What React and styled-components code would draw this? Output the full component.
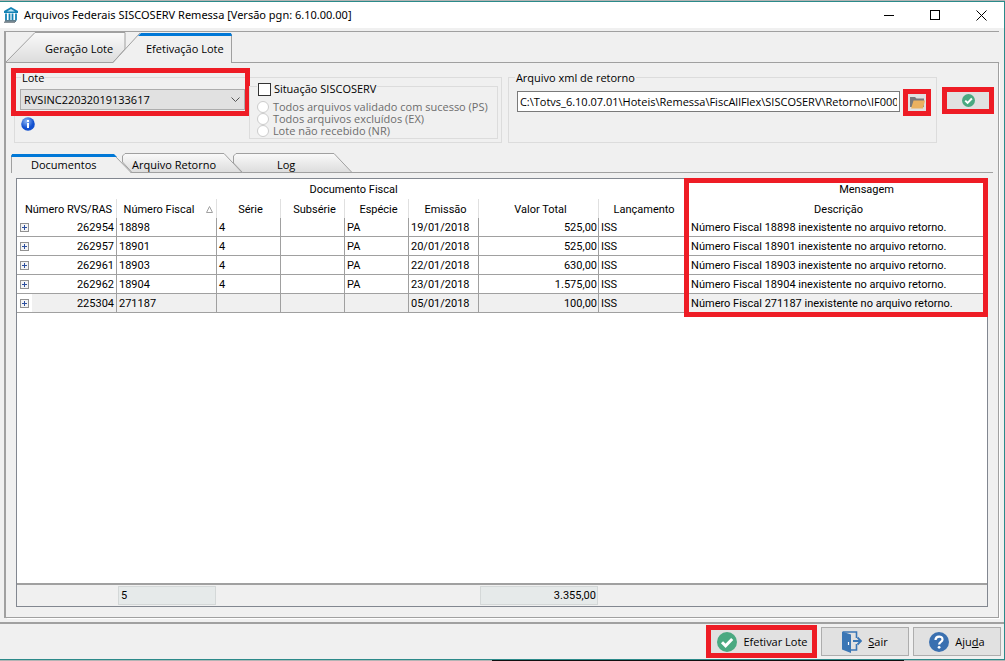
import React from 'react';
import styled, { createGlobalStyle, css } from 'styled-components';

const GlobalStyle = createGlobalStyle`
  * {
    box-sizing: border-box;
  }
  body {
    margin: 0;
    font-family: 'Open Sans', 'Noto Sans', sans-serif;
    font-size: 11px;
    line-height: 14px;
    color: #000;
  }
  button, input, select {
    font: inherit;
    color: inherit;
  }
`;

//--------- WINDOW ----------//
const Desktop = styled.div`
  min-height: 100vh;
  padding: 1px 0;
  display: flex;
  background: linear-gradient(#b4b4b4, #b4b4b4) top / 100% 1px no-repeat,
    linear-gradient(90deg, #b4b4b4 49%, #101010 49%, #101010 90%, #b4b4b4 90%);
`;

const Window = styled.div`
  flex: 1;
  min-width: 0;
  display: flex;
  flex-direction: column;
  background: #f0f0f0;
  border: 1px solid #2b8a8a;
  border-left: 0;
`;

const TitleBar = styled.header`
  display: flex;
  align-items: center;
  height: 26px;
  padding-left: 3px;
  background: #fff;
`;

const Title = styled.h1`
  flex: 1;
  margin: 0 0 0 5px;
  font-size: 11px;
  line-height: 16px;
  font-weight: 400;
  font-family: 'Noto Sans', sans-serif;
  white-space: nowrap;
`;

const CaptionButton = styled.button`
  width: 46px;
  height: 26px;
  padding: 0;
  border: 0;
  background: none;
  display: flex;
  align-items: center;
  justify-content: center;
`;

const Panel = styled.main`
  flex: 1;
  display: flex;
  flex-direction: column;
  margin: 3px 5px 4px 4px;
  border-left: 2px solid #a0a0a0;
  border-top: 1px solid #a0a0a0;
`;

const PanelBody = styled.div`
  flex: 1;
  display: flex;
  flex-direction: column;
  border-right: 1px solid #a0a0a0;
  border-bottom: 1px solid #a0a0a0;
  box-shadow: 1px 1px 0 #fff;
`;

//--------- TABS ----------//
const TabStrip = styled.div`
  display: flex;
  height: ${({ $small }) => ($small ? 20 : 31)}px;
  margin: ${({ $small }) => ($small ? '10px 5px 0' : '0')};
  box-shadow: inset 0 -1px 0 #a0a0a0;
`;

const Tab = styled.button`
  position: relative;
  flex: none;
  width: ${({ $width }) => $width}px;
  margin: 0 0 0 -${({ $overlap }) => $overlap || 0}px;
  padding: ${({ $small }) => ($small ? '4px' : '3px')} 0 0
    ${({ $indent }) => $indent}px;
  border: 0;
  background: none;
  text-align: left;
  white-space: nowrap;
`;

const TabShape = styled.svg`
  position: absolute;
  inset: 0;
`;

const TabLabel = styled.span`
  position: relative;
`;

//--------- FILTERS ----------//
const Filters = styled.section`
  display: flex;
  align-items: flex-start;
  padding: 14px 4px 0 8px;
`;

const Group = styled.fieldset`
  position: relative;
  display: flex;
  flex: ${({ $grow }) => $grow} 1 0;
  min-width: 0;
  height: 66px;
  margin: 0 6px 0 0;
  padding: 0;
  border: 1px solid #dcdcdc;
`;

const Legend = styled.legend`
  position: absolute;
  top: -7px;
  left: 6px;
  padding: 0 1px;
  background: #f0f0f0;
  white-space: nowrap;
`;

const CheckLegend = styled(Legend)`
  top: -5px;
  left: 7px;
`;

const LoteColumn = styled.div`
  flex: 1;
  padding: 11px 4px 0 5px;
`;

const highlight = css`
  &::after {
    content: '';
    position: absolute;
    border: 5px solid #ee1c25;
    pointer-events: none;
  }
`;

const SelectWrap = styled.div`
  position: relative;
  height: 21px;
  ${highlight}
  &::after {
    inset: -21px -5px -6px -9px;
  }
  svg {
    position: absolute;
    right: 5px;
    top: 8px;
    pointer-events: none;
  }
`;

const Select = styled.select`
  appearance: none;
  display: block;
  width: 100%;
  height: 21px;
  padding: 0 20px 0 3px;
  border: 1px solid #adadad;
  border-radius: 0;
  background: #e1e1e1;
`;

const InfoIcon = styled.svg`
  display: block;
  margin: 7px 0 0 1px;
`;

const SituationGroup = styled.fieldset`
  position: relative;
  width: 249px;
  height: 53px;
  margin: 8px 3px 0 0;
  padding: 14px 0 0 7px;
  border: 1px solid #dcdcdc;
`;

const CheckLabel = styled.label`
  display: flex;
  align-items: center;
  gap: 3px;
`;

const CheckBox = styled.input`
  appearance: none;
  width: 13px;
  height: 13px;
  margin: 0;
  border: 1px solid #333;
  background: #fff;
`;

const RadioLabel = styled.label`
  display: flex;
  align-items: center;
  gap: 4px;
  height: 12px;
  line-height: 12px;
  color: #6d6d6d;
  white-space: nowrap;
`;

const Radio = styled.input`
  appearance: none;
  flex: none;
  width: 12px;
  height: 12px;
  margin: 0;
  border: 1px solid #ccc;
  border-radius: 50%;
  background: #fff;
`;

const FileInput = styled.input`
  flex: 1;
  min-width: 0;
  height: 21px;
  margin: 13px 0 0 8px;
  padding: 0 2px;
  border: 1px solid #7a7a7a;
  background: #fff;
`;

const IconButton = styled.button`
  position: relative;
  display: flex;
  align-items: center;
  justify-content: center;
  flex: none;
  width: ${({ $width }) => $width}px;
  height: 17px;
  margin: ${({ $margin }) => $margin};
  padding: 0;
  border: 0;
  background: #e1e1e1;
  ${highlight}
  &::after {
    inset: -5px;
  }
`;

//--------- GRID ----------//
const GridFrame = styled.div`
  position: relative;
  flex: 1;
  display: flex;
  flex-direction: column;
  margin: 5px 10px 10px;
  border: 1px solid #828790;
  background: #fff;
  font-family: Roboto, 'Liberation Sans', sans-serif;
  line-height: 13px;
`;

const Table = styled.table`
  width: 100%;
  table-layout: fixed;
  border-collapse: separate;
  border-spacing: 0;
`;

const Band = styled.th`
  height: 20px;
  padding: 0 0 0 ${({ $indent }) => $indent}px;
  font-weight: 400;
`;

const HeadCell = styled.th`
  height: 19px;
  padding: 2px 0 0 4px;
  font-weight: 400;
  white-space: nowrap;
  border-right: ${({ $plain }) => ($plain ? 0 : '1px solid #e0e0e0')};
`;

const SortMark = styled.svg`
  margin-left: 12px;
`;

const Row = styled.tr`
  background: ${({ $current }) => ($current ? '#f0f0f0' : '#fff')};
`;

const Cell = styled.td`
  height: 19px;
  padding: 0 ${({ $right }) => ($right ? 1 : 2)}px 0 2px;
  text-align: ${({ $right }) => ($right ? 'right' : 'left')};
  white-space: nowrap;
  border-right: 1px solid #a0a0a0;
  border-bottom: 1px solid #a0a0a0;
  &:last-child {
    padding-left: 5px;
    border-right: 0;
  }
`;

const KeyCell = styled(Cell)`
  padding-left: 0;
`;

const KeyContent = styled.div`
  display: flex;
  align-items: center;
  justify-content: space-between;
`;

const ExpandBox = styled.span`
  display: flex;
  align-items: center;
  width: 15px;
  height: 18px;
  padding-left: 3px;
  background: #fff;
`;

const Expand = styled.button`
  width: 9px;
  height: 9px;
  padding: 0;
  border: 1px solid #919191;
  background: linear-gradient(#2c4f9e, #2c4f9e) center / 5px 1px no-repeat,
    linear-gradient(#2c4f9e, #2c4f9e) center / 1px 5px no-repeat, #f4f4f4;
`;

const MessageMark = styled.div`
  position: absolute;
  top: -1px;
  right: -1px;
  left: 667px;
  height: 139px;
  border: 5px solid #ee1c25;
  pointer-events: none;
`;

const Summary = styled.div`
  display: flex;
  height: 23px;
  margin-top: auto;
  padding: 1px 0 0 101px;
  border-top: 2px solid #a0a0a0;
  background: #f0f0f0;
`;

const Total = styled.output`
  width: ${({ $width }) => $width}px;
  height: 19px;
  margin-right: 264px;
  padding: 2px 1px 2px 2px;
  border: 1px solid #d4d8d8;
  background: #e6eaea;
  text-align: ${({ $right }) => ($right ? 'right' : 'left')};
`;

//--------- FOOTER ----------//
const Footer = styled.footer`
  display: flex;
  justify-content: flex-end;
  gap: 4px;
  height: 37px;
  padding: 3px 3px 0;
  border-top: 2px solid #a0a0a0;
`;

const ActionButton = styled.button`
  position: relative;
  display: flex;
  align-items: center;
  justify-content: center;
  gap: 6px;
  width: ${({ $width }) => $width}px;
  height: 29px;
  padding: 0;
  border: 1px solid #adadad;
  background: #e1e1e1;
  white-space: nowrap;
  ${({ $marked }) =>
    $marked &&
    css`
      ${highlight}
      &::after {
        inset: -3px -1px -3px -3px;
      }
    `}
`;

const CheckIcon = ({ size }) => (
  <svg width={size} height={size} viewBox="0 0 20 20">
    <circle cx="10" cy="10" r="10" fill="#4aa981" />
    <path d="M5 10.2l3.6 3.6L15.2 7" fill="none" stroke="#fff" strokeWidth="3" />
  </svg>
);

const BuildingIcon = () => (
  <svg width="16" height="17" viewBox="0 0 16 17">
    <path d="M8 0l7 4v2H1V4z" fill="#1583b5" />
    <path d="M4 4.4L8 2l4 2.4z" fill="#bfe6f5" />
    <path d="M3 6.5v7M6.5 6.5v7M9.5 6.5v7M13 6.5v7" stroke="#1583b5" strokeWidth="1.8" />
    <path d="M2 13h11v2H2z" fill="#5f7d8c" />
    <path d="M1 14.5h11v1.5H1z" fill="#8a9399" />
  </svg>
);

const FolderIcon = () => (
  <svg width="15" height="13" viewBox="0 0 15 13">
    <path d="M0 11V1h5l1.5 1.5H14V11z" fill="#77787b" />
    <path d="M3.5 4.5H15L13 12.5H1z" fill="#ebb15f" />
  </svg>
);

const ExitIcon = () => (
  <svg width="20" height="22" viewBox="0 0 20 22">
    <path d="M1 1h13.500v6M14.500 13v6H9" fill="none" stroke="#3a76b5" strokeWidth="1.600" />
    <path d="M0 .5l9 3V22l-9-3.500z" fill="#3a76b5" />
    <path d="M6.500 11v3" stroke="#fff" strokeWidth="1.200" />
    <path d="M11 10h8M15.500 6.500L19 10l-3.500 3.500" fill="none" stroke="#3a76b5" strokeWidth="1.800" />
  </svg>
);

const HelpIcon = () => (
  <svg width="20" height="20" viewBox="0 0 20 20">
    <circle cx="10" cy="10" r="10" fill="#3a70b0" />
    <path
      d="M6.500 8c0-4.500 7-4.500 7-.600 0 2.400-3.400 2.400-3.400 5"
      fill="none"
      stroke="#fff"
      strokeWidth="2.200"
    />
    <circle cx="10.100" cy="15.300" r="1.400" fill="#fff" />
  </svg>
);

const documents = [
  ['262954', '18898', '4', 'PA', '19/01/2018', '525,00'],
  ['262957', '18901', '4', 'PA', '20/01/2018', '525,00'],
  ['262961', '18903', '4', 'PA', '22/01/2018', '630,00'],
  ['262962', '18904', '4', 'PA', '23/01/2018', '1.575,00'],
  ['225304', '271187', '', '', '05/01/2018', '100,00'],
];

const situations = [
  'Todos arquivos validado com sucesso (PS)',
  'Todos arquivos excluídos (EX)',
  'Lote não recebido (NR)',
];

const columnWidths = [100, 100, 64, 64, 64, 70, 120, 87];

//--------- APP ----------//
const App = () => {
  return (
    <Desktop>
      <GlobalStyle />
      <Window>
        <TitleBar>
          <BuildingIcon />
          <Title>Arquivos Federais SISCOSERV Remessa [Versão pgn: 6.10.00.00]</Title>
          <CaptionButton aria-label="Minimizar">
            <svg width="10" height="11" shapeRendering="crispEdges">
              <path d="M0 5.5h10" stroke="#000" />
            </svg>
          </CaptionButton>
          <CaptionButton aria-label="Maximizar">
            <svg width="10" height="10" shapeRendering="crispEdges">
              <path d="M.5.5h9v9h-9z" fill="none" stroke="#000" />
            </svg>
          </CaptionButton>
          <CaptionButton aria-label="Fechar">
            <svg width="11" height="11">
              <path d="M.5.5l10 10M10.5.5l-10 10" stroke="#000" />
            </svg>
          </CaptionButton>
        </TitleBar>

        <Panel>
          <TabStrip role="tablist">
            <Tab role="tab" aria-selected="false" $width={124} $indent={39}>
              <TabShape width="124" height="31">
                <defs>
                  <linearGradient id="tab" x2="0" y2="1">
                    <stop offset="0" stopColor="#fafafa" />
                    <stop offset="1" stopColor="#dcdcdc" />
                  </linearGradient>
                </defs>
                <path d="M-.5 30.5L29 .5h90V17L107 30.5z" fill="url(#tab)" stroke="#a0a0a0" />
              </TabShape>
              <TabLabel>Geração Lote</TabLabel>
            </Tab>
            <Tab role="tab" aria-selected="true" $width={119} $overlap={17} $indent={33}>
              <TabShape width="119" height="31">
                <path d="M0 31L27 1h91.5v30z" fill="#f0f0f0" />
                <path d="M0 30.5L27 1M118.5 2v29" fill="none" stroke="#a0a0a0" />
                <path d="M25 4l3-3h90l1 3z" fill="#0078d7" />
              </TabShape>
              <TabLabel>Efetivação Lote</TabLabel>
            </Tab>
          </TabStrip>

          <PanelBody>
            <Filters>
              <Group $grow={488}>
                <Legend as="label" htmlFor="lote">Lote</Legend>
                <LoteColumn>
                  <SelectWrap>
                    <Select id="lote">
                      <option>RVSINC22032019133617</option>
                    </Select>
                    <svg width="9" height="6">
                      <path d="M.5.5l4 4 4-4" fill="none" stroke="#555" />
                    </svg>
                  </SelectWrap>
                  <InfoIcon width="14" height="14" viewBox="0 0 14 14">
                    <defs>
                      <radialGradient id="info" cx=".4" cy=".3">
                        <stop offset="0" stopColor="#8fb8f5" />
                        <stop offset="1" stopColor="#1250cf" />
                      </radialGradient>
                    </defs>
                    <circle cx="7" cy="7" r="6.8" fill="url(#info)" />
                    <path d="M6 6h2v5H6zM6 3h2v2H6z" fill="#fff" />
                  </InfoIcon>
                </LoteColumn>
                <SituationGroup>
                  <CheckLegend>
                    <CheckLabel>
                      <CheckBox type="checkbox" />
                      Situação SISCOSERV
                    </CheckLabel>
                  </CheckLegend>
                  {situations.map((text) => (
                    <RadioLabel key={text}>
                      <Radio type="radio" name="situacao" disabled />
                      {text}
                    </RadioLabel>
                  ))}
                </SituationGroup>
              </Group>

              <Group $grow={429}>
                <Legend as="label" htmlFor="arquivo">Arquivo xml de retorno</Legend>
                <FileInput
                  id="arquivo"
                  defaultValue="C:\Totvs_6.10.07.01\Hoteis\Remessa\FiscAllFlex\SISCOSERV\Retorno\IF00000"
                />
                <IconButton $width={18} $margin="16px 10px 0 8px" aria-label="Abrir">
                  <FolderIcon />
                </IconButton>
              </Group>

              <IconButton $width={42} $margin="15px 5px 0 4px" aria-label="Validar">
                <CheckIcon size={13} />
              </IconButton>
            </Filters>

            <TabStrip role="tablist" $small>
              <Tab role="tab" aria-selected="true" $small $width={121} $indent={20}>
                <TabShape width="121" height="20">
                  <path d="M.5 1H104l16 19H.5z" fill="#f0f0f0" />
                  <path d="M.5 2v18M103 2l17.5 18" fill="none" stroke="#a0a0a0" />
                  <path d="M0 4l1-3h102l3 3z" fill="#0078d7" />
                </TabShape>
                <TabLabel>Documentos</TabLabel>
              </Tab>
              <Tab role="tab" aria-selected="false" $small $width={121} $overlap={10} $indent={10}>
                <TabShape width="121" height="20">
                  <path d="M10 19.5L.5 9V3L3 .5h99L120 19.5z" fill="url(#tab)" stroke="#a0a0a0" />
                </TabShape>
                <TabLabel>Arquivo Retorno</TabLabel>
              </Tab>
              <Tab role="tab" aria-selected="false" $small $width={120} $overlap={10} $indent={44}>
                <TabShape width="120" height="20">
                  <path d="M9.5 19.5L.5 10V3L3 .5h98L119 19.5z" fill="url(#tab)" stroke="#a0a0a0" />
                </TabShape>
                <TabLabel>Log</TabLabel>
              </Tab>
            </TabStrip>

            <GridFrame>
              <Table>
                <colgroup>
                  {columnWidths.map((width, i) => (
                    <col key={i} width={width} />
                  ))}
                  <col />
                </colgroup>
                <thead>
                  <tr>
                    <Band colSpan={8} $indent={4}>Documento Fiscal</Band>
                    <Band $indent={60}>Mensagem</Band>
                  </tr>
                  <tr>
                    <HeadCell>Número RVS/RAS</HeadCell>
                    <HeadCell>
                      Número Fiscal
                      <SortMark width="7" height="7">
                        <path d="M.5 6.5h6L3.5.5z" fill="none" stroke="#a0a0a0" />
                      </SortMark>
                    </HeadCell>
                    <HeadCell>Série</HeadCell>
                    <HeadCell>Subsérie</HeadCell>
                    <HeadCell>Espécie</HeadCell>
                    <HeadCell>Emissão</HeadCell>
                    <HeadCell>Valor Total</HeadCell>
                    <HeadCell>Lançamento</HeadCell>
                    <HeadCell $plain>Descrição</HeadCell>
                  </tr>
                </thead>
                <tbody>
                  {documents.map(([rvs, fiscal, serie, especie, emissao, valor], i) => (
                    <Row key={rvs} $current={i === documents.length - 1}>
                      <KeyCell>
                        <KeyContent>
                          <ExpandBox>
                            <Expand aria-label="Expandir" />
                          </ExpandBox>
                          {rvs}
                        </KeyContent>
                      </KeyCell>
                      <Cell>{fiscal}</Cell>
                      <Cell>{serie}</Cell>
                      <Cell />
                      <Cell>{especie}</Cell>
                      <Cell>{emissao}</Cell>
                      <Cell $right>{valor}</Cell>
                      <Cell>ISS</Cell>
                      <Cell>Número Fiscal {fiscal} inexistente no arquivo retorno.</Cell>
                    </Row>
                  ))}
                </tbody>
              </Table>
              <MessageMark />
              <Summary>
                <Total $width={98}>5</Total>
                <Total $width={118} $right>3.355,00</Total>
              </Summary>
            </GridFrame>
          </PanelBody>
        </Panel>

        <Footer>
          <ActionButton $width={109} $marked>
            <CheckIcon size={20} />
            Efetivar Lote
          </ActionButton>
          <ActionButton $width={88}>
            <ExitIcon />
            <span><u>S</u>air</span>
          </ActionButton>
          <ActionButton $width={88}>
            <HelpIcon />
            <span>Aju<u>d</u>a</span>
          </ActionButton>
        </Footer>
      </Window>
    </Desktop>
  );
};

export default App;
